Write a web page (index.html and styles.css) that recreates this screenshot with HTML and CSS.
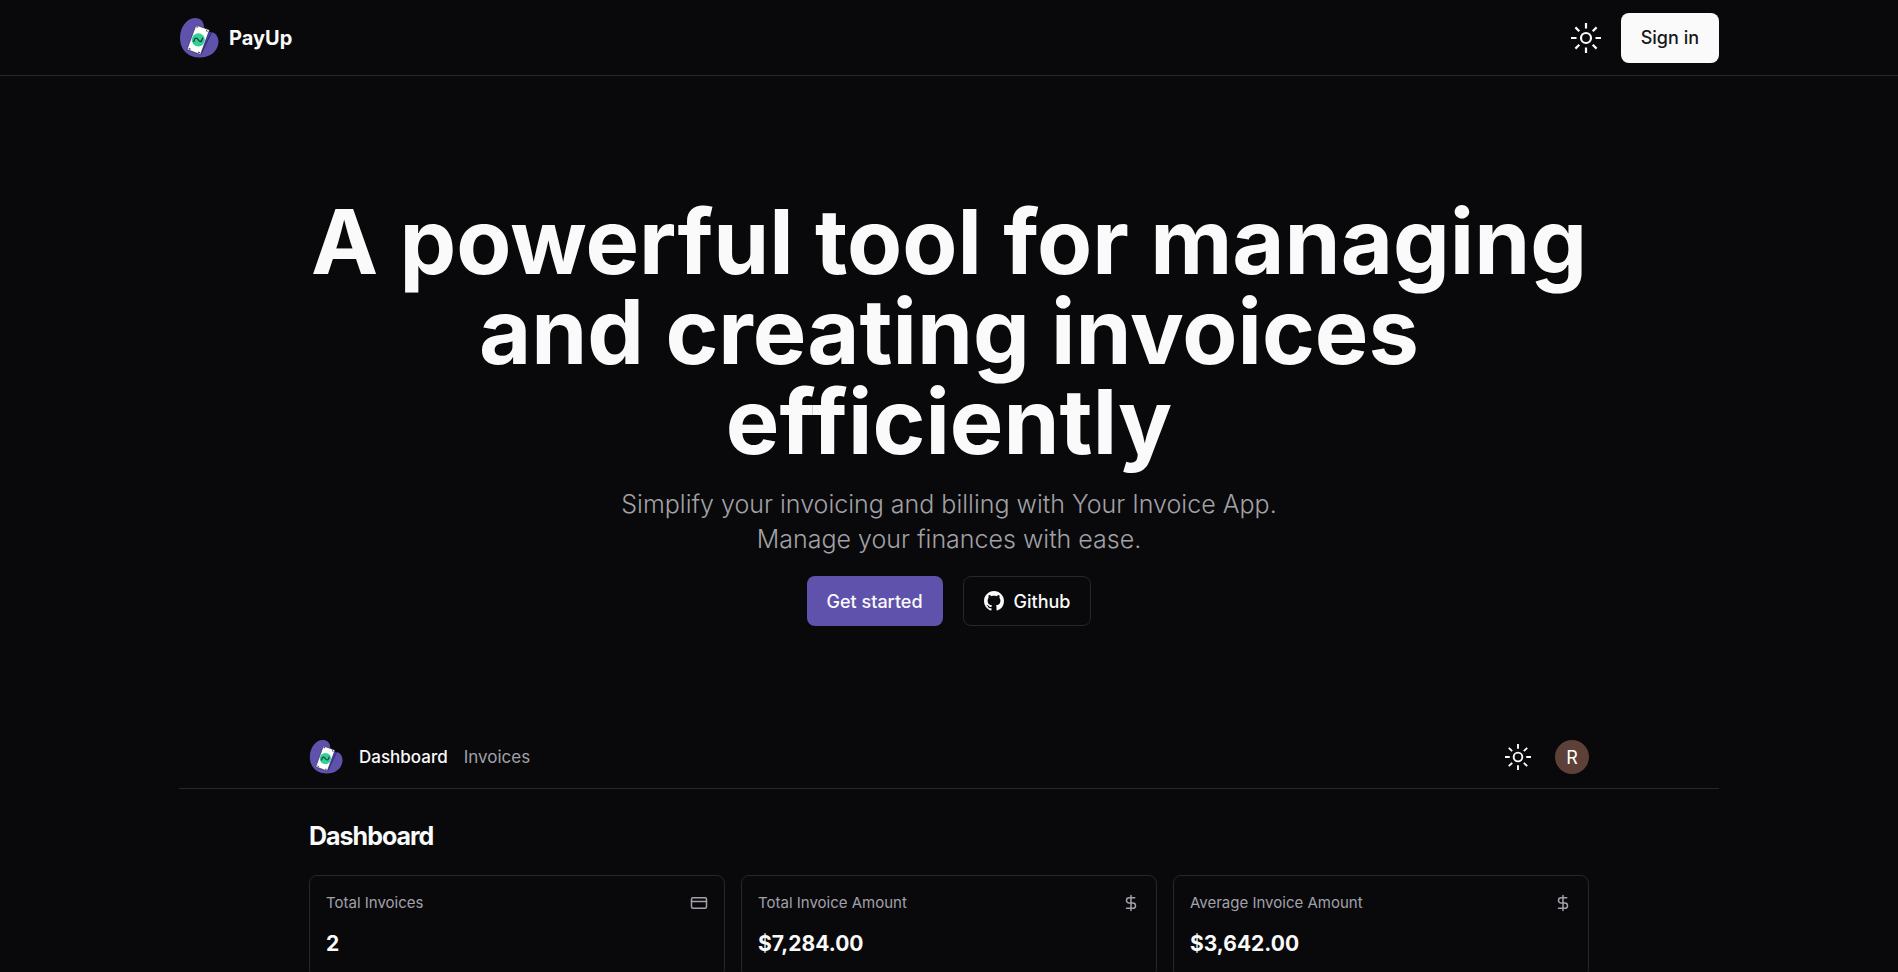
FILE: index.html
```html
<!DOCTYPE html>
<html lang="en">
<head>
<meta charset="utf-8">
<meta name="viewport" content="width=device-width, initial-scale=1">
<title>PayUp</title>
<link rel="stylesheet" href="styles.css">
</head>
<body>
<svg class="sprite" aria-hidden="true">
  <symbol id="logo" viewBox="0 0 40 40">
    <path fill="#5f52ad" d="M16 0C21 0 24.500 3 24.800 7.500C25 11.500 27 14 31 14C36 14 39.500 18 39.500 24C39 33 31.500 39.500 21 39.500C9 39.500 1 32 1 20C1 9 8 0 16 0Z"/>
    <path fill="#4a3fb0" stroke="#1b1840" stroke-width=".6" d="M28.500 13L32.500 14.500L22.500 35.500L20 36Z"/>
    <path fill="#fff" stroke="#1b1840" stroke-width=".6" stroke-linejoin="round" d="M17 7L30.500 12L21.500 36.500L8 31.500Z"/>
    <path fill="#1b1840" d="M16.800 8.600L19 8.200L18.300 10ZM29.200 13.800L27 11.600L27.200 13.200ZM9.300 30L11.200 32.200L11.500 30.600ZM21.400 34.800L18.800 35L19.800 33.400Z"/>
    <circle cx="19.300" cy="21.800" r="6.600" fill="#35cf95"/>
    <path fill="none" stroke="#173f40" stroke-width="1.300" stroke-linecap="round" d="M15.300 22.200C15.500 19.500 18 19.700 19.200 21.800S22.800 24.300 23 21.400M15.300 22.200L14.700 23.500M23 21.400L23.700 20.100"/>
  </symbol>
  <symbol id="sun" viewBox="0 0 30 30">
    <g fill="none" stroke="currentColor" stroke-width="2.200">
      <circle cx="15" cy="15" r="5"/>
      <path d="M15 0V5.500M15 24.500V30M0 15H5.500M24.500 15H30M4.400 4.400L8.300 8.300M21.700 21.700L25.600 25.600M4.400 25.600L8.300 21.700M21.700 8.300L25.600 4.400"/>
    </g>
  </symbol>
  <symbol id="dollar" viewBox="0 0 24 24">
    <path fill="none" stroke="currentColor" stroke-width="2" stroke-linecap="round" stroke-linejoin="round" d="M12 2v20M17 5H9.500a3.500 3.500 0 0 0 0 7h5a3.500 3.500 0 0 1 0 7H6"/>
  </symbol>
  <symbol id="card" viewBox="0 0 24 24">
    <g fill="none" stroke="currentColor" stroke-width="2" stroke-linecap="round" stroke-linejoin="round"><rect x="2" y="5" width="20" height="14" rx="2"/><path d="M2 10h20"/></g>
  </symbol>
</svg>

<header class="site-header">
  <div class="container site-bar">
    <a class="brand" href="#"><svg class="brand-logo" aria-hidden="true"><use href="#logo"/></svg><span>PayUp</span></a>
    <div class="site-actions">
      <button class="icon-button" type="button" aria-label="Toggle theme"><svg class="sun" aria-hidden="true"><use href="#sun"/></svg></button>
      <a class="button button-light" href="#">Sign in</a>
    </div>
  </div>
</header>

<main class="container">
  <section class="hero">
    <h1>A powerful tool for managing and creating invoices efficiently</h1>
    <p>Simplify your invoicing and billing with Your Invoice App. Manage your finances with ease.</p>
    <div class="hero-actions">
      <a class="button button-primary" href="#">Get started</a>
      <a class="button button-outline" href="#">
        <svg class="github" viewBox="0 0 16 16" aria-hidden="true"><path fill="currentColor" d="M8 0C3.580 0 0 3.580 0 8c0 3.540 2.290 6.530 5.470 7.590.4.070.55-.17.55-.38 0-.19-.01-.82-.01-1.490-2.010.37-2.530-.49-2.690-.94-.09-.23-.48-.94-.82-1.130-.28-.15-.68-.52-.01-.53.63-.01 1.080.58 1.230.82.72 1.210 1.870.87 2.330.66.07-.52.28-.87.51-1.070-1.780-.2-3.640-.89-3.640-3.950 0-.87.31-1.590.82-2.150-.08-.2-.36-1.020.08-2.120 0 0 .67-.21 2.200.82.64-.18 1.320-.27 2-.27s1.360.09 2 .27c1.530-1.040 2.200-.82 2.200-.82.44 1.100.16 1.920.08 2.120.51.56.82 1.270.82 2.150 0 3.070-1.870 3.750-3.650 3.950.29.25.54.73.54 1.480 0 1.070-.01 1.930-.01 2.200 0 .21.15.46.55.38A8.010 8.010 0 0 0 16 8c0-4.420-3.580-8-8-8Z"/></svg>
        Github
      </a>
    </div>
  </section>

  <section class="preview" aria-label="Dashboard preview">
    <div class="preview-bar">
      <nav class="preview-nav" aria-label="Preview">
        <svg class="preview-logo" aria-hidden="true"><use href="#logo"/></svg>
        <a class="active" href="#">Dashboard</a>
        <a href="#">Invoices</a>
      </nav>
      <div class="preview-actions">
        <button class="icon-button" type="button" aria-label="Toggle preview theme"><svg class="sun-small" aria-hidden="true"><use href="#sun"/></svg></button>
        <button class="avatar" type="button">R</button>
      </div>
    </div>
    <div class="preview-body">
      <h2>Dashboard</h2>
      <div class="cards">
        <article class="card">
          <div class="card-head"><h3>Total Invoices</h3><svg class="card-icon" aria-hidden="true"><use href="#card"/></svg></div>
          <p>2</p>
        </article>
        <article class="card">
          <div class="card-head"><h3>Total Invoice Amount</h3><svg class="card-icon" aria-hidden="true"><use href="#dollar"/></svg></div>
          <p>$7,284.00</p>
        </article>
        <article class="card">
          <div class="card-head"><h3>Average Invoice Amount</h3><svg class="card-icon" aria-hidden="true"><use href="#dollar"/></svg></div>
          <p>$3,642.00</p>
        </article>
      </div>
    </div>
  </section>
</main>
</body>
</html>
```
FILE: styles.css
```css
* { box-sizing: border-box; }
html, body { height: 100%; }
body {
  margin: 0;
  overflow: hidden;
  background: #09090b;
  color: #fafafa;
  font-family: Inter, "Liberation Sans", sans-serif;
  font-size: 18px;
}
a { color: inherit; text-decoration: none; }
h1, h2, h3, p { margin: 0; }
svg { display: block; flex: none; }
.sprite { position: absolute; width: 0; height: 0; }
.container { max-width: 1540px; margin: 0 auto; }

.site-header { border-bottom: 1px solid #27272a; }
.site-bar { display: flex; align-items: center; justify-content: space-between; height: 75px; }
.brand { display: flex; align-items: center; gap: 10px; font-size: 20px; font-weight: 700; }
.brand-logo { width: 40px; height: 40px; }
.site-actions { display: flex; align-items: center; gap: 20px; }
.icon-button { padding: 0; border: 0; background: none; color: inherit; }
.sun { width: 30px; height: 30px; }

.button {
  display: inline-flex;
  align-items: center;
  gap: 10px;
  height: 50px;
  padding: 0 20px;
  border-radius: 8px;
  font-weight: 500;
}
.button-light { background: #fafafa; color: #18181b; }
.button-primary { background: #5f52ad; }
.button-outline { border: 1px solid #27272a; }
.github { width: 20px; height: 20px; }

.hero {
  display: flex;
  flex-direction: column;
  align-items: center;
  padding: 121px 0 100px;
  text-align: center;
}
.hero h1 { max-width: 1280px; font-size: 90px; line-height: 90px; font-weight: 700; font-feature-settings: "calt" 0, "liga" 0; }
.hero p { max-width: 720px; margin: 20px 0 19px; color: #a1a1a6; font-size: 25px; line-height: 35px; font-weight: 350; }
.hero-actions { display: flex; gap: 20px; }

.preview-bar {
  display: flex;
  align-items: center;
  justify-content: space-between;
  height: 63px;
  padding: 0 130px;
  border-bottom: 1px solid #27272a;
  font-size: 17px;
}
.preview-nav { display: flex; align-items: center; gap: 16px; color: #a1a1aa; }
.preview-nav .active { color: #fafafa; font-weight: 500; }
.preview-logo { width: 34px; height: 34px; }
.preview-actions { display: flex; align-items: center; gap: 24px; }
.sun-small { width: 26px; height: 26px; }
.avatar {
  width: 34px;
  height: 34px;
  padding: 0;
  border: 0;
  border-radius: 50%;
  background: #5d4037;
  color: #fff;
  font: 400 18px Inter, sans-serif;
}
.preview-body { padding: 31px 130px; }
.preview-body h2 { font-size: 25px; line-height: 32px; font-weight: 700; letter-spacing: -1px; }
.cards { display: grid; grid-template-columns: repeat(3, 1fr); gap: 16px; margin-top: 23px; }
.card { padding: 16px; border: 1px solid #27272a; border-radius: 8px; }
.card-head { display: flex; align-items: center; justify-content: space-between; color: #a1a1aa; }
.card-head h3 { font-size: 15px; line-height: 22px; font-weight: 400; }
.card-icon { width: 18px; height: 18px; }
.card p { margin-top: 14px; font-size: 21px; line-height: 32px; font-weight: 700; }
```
